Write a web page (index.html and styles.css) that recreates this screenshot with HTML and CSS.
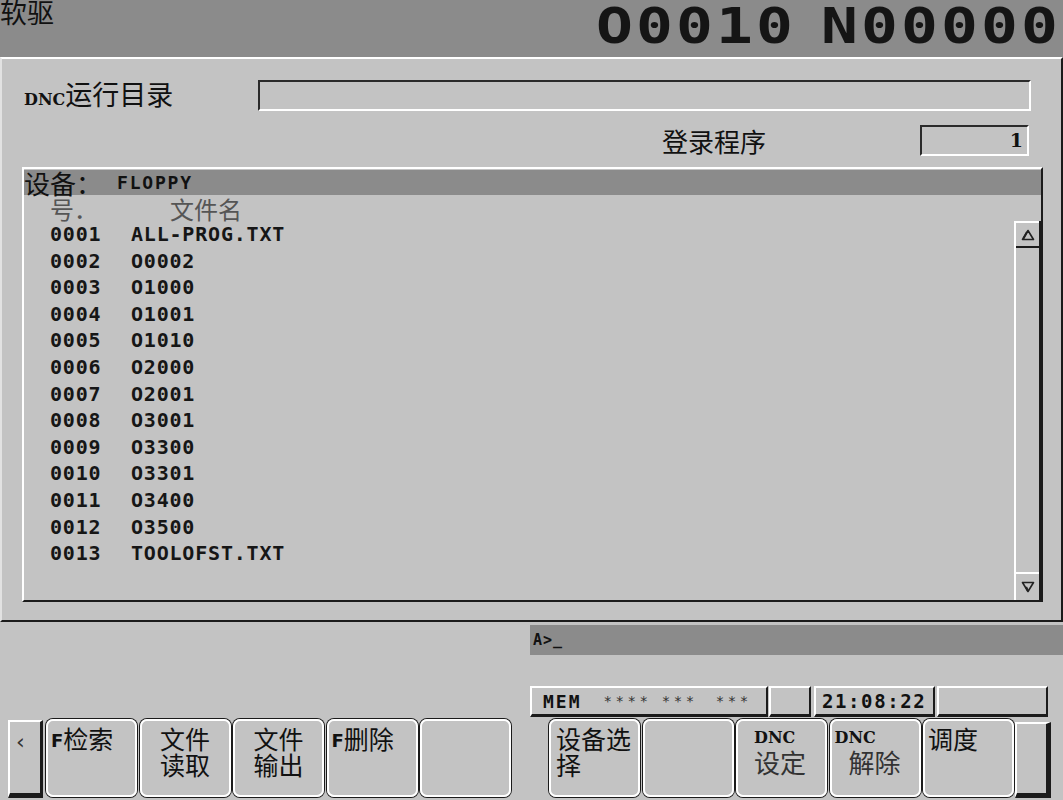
FILE: index.html
```html
<!DOCTYPE html>
<html lang="zh-CN">
<head>
<meta charset="utf-8">
<title>软驱 DNC</title>
<link rel="stylesheet" href="styles.css">
</head>
<body>
<div class="screen">
  <header class="topbar">
    <div class="mode">软驱</div>
    <div class="prog"><span>O0010</span><span>N00000</span></div>
  </header>

  <main class="main">
    <div class="row-dir">
      <div class="dir-label"><span class="latin">DNC</span>运行目录</div>
      <div class="field field-dir"></div>
    </div>
    <div class="row-reg">
      <div class="reg-label">登录程序</div>
      <div class="field field-reg">1</div>
    </div>

    <section class="list">
      <div class="list-head"><span class="dev">设备：</span><span class="devname">FLOPPY</span></div>
      <div class="list-body">
        <div class="list-main">
          <div class="cols"><span class="c-no">号．</span><span class="c-name">文件名</span></div>
          <ul class="files">
            <li><span class="no">0001</span><span class="nm">ALL-PROG.TXT</span></li>
            <li><span class="no">0002</span><span class="nm">O0002</span></li>
            <li><span class="no">0003</span><span class="nm">O1000</span></li>
            <li><span class="no">0004</span><span class="nm">O1001</span></li>
            <li><span class="no">0005</span><span class="nm">O1010</span></li>
            <li><span class="no">0006</span><span class="nm">O2000</span></li>
            <li><span class="no">0007</span><span class="nm">O2001</span></li>
            <li><span class="no">0008</span><span class="nm">O3001</span></li>
            <li><span class="no">0009</span><span class="nm">O3300</span></li>
            <li><span class="no">0010</span><span class="nm">O3301</span></li>
            <li><span class="no">0011</span><span class="nm">O3400</span></li>
            <li><span class="no">0012</span><span class="nm">O3500</span></li>
            <li><span class="no">0013</span><span class="nm">TOOLOFST.TXT</span></li>
          </ul>
        </div>
        <div class="scroll">
          <div class="sb-btn sb-up">
            <svg width="14" height="12" viewBox="0 0 14 12"><path d="M7 1.5 L12.5 10.5 H1.5 Z" fill="none" stroke="#222" stroke-width="1.6" stroke-linejoin="round"/><path d="M6 3 L2.5 9.5" stroke="#222" stroke-width="2"/></svg>
          </div>
          <div class="sb-track"></div>
          <div class="sb-btn sb-down">
            <svg width="14" height="12" viewBox="0 0 14 12"><path d="M1.5 1.5 H12.5 L7 10.5 Z" fill="none" stroke="#222" stroke-width="1.6" stroke-linejoin="round"/><path d="M5 6 L7 10" stroke="#222" stroke-width="2.2"/></svg>
          </div>
        </div>
      </div>
    </section>
  </main>

  <footer class="bottom">
    <div class="console">
      <div class="input">A&gt;_</div>
      <div class="status">
        <div class="cell c-mem"><b class="mem">MEM</b><span class="stars s1">****</span><span class="stars s2">***</span><span class="stars s3">***</span></div>
        <div class="cell c-e1"></div>
        <div class="cell c-time">21:08:22</div>
        <div class="cell c-e2"></div>
      </div>
    </div>
    <div class="softkeys">
      <div class="nav-key nav-left">‹</div>
      <div class="keygroup">
        <div class="key k-left"><b class="kf">F</b>检索</div>
        <div class="key k-center">文件<br>读取</div>
        <div class="key k-center">文件<br>输出</div>
        <div class="key k-left"><b class="kf">F</b>删除</div>
        <div class="key"></div>
      </div>
      <div class="keygroup group-right">
        <div class="key k-left k-wide">设备选<br>择</div>
        <div class="key"></div>
        <div class="key k-dnc k-dnc-set"><span class="kdnc">DNC</span><span class="kcn">设定</span></div>
        <div class="key k-dnc k-dnc-rel"><span class="kdnc">DNC</span><span class="kcn">解除</span></div>
        <div class="key k-left">调度</div>
      </div>
      <div class="nav-key nav-right"></div>
    </div>
  </footer>
</div>
</body>
</html>
```

FILE: styles.css
```css
* { box-sizing: border-box; margin: 0; padding: 0; }
html, body { width: 1063px; height: 800px; overflow: hidden; }
body {
  background: #c3c3c3;
  font-family: "Noto Sans CJK SC", sans-serif;
  color: #111;
}
.screen { width: 1063px; height: 800px; display: flex; flex-direction: column; }

/* top bar */
.topbar {
  height: 57px;
  flex: none;
  background: #8b8b8b;
  display: flex;
  justify-content: space-between;
  align-items: flex-start;
}
.mode { font-size: 27px; line-height: 30px; margin-top: -3px; }
.prog {
  font-family: "DejaVu Sans Mono", monospace;
  font-weight: bold;
  font-size: 49px;
  line-height: 50px;
  letter-spacing: 2.5px;
  display: flex;
  gap: 20px;
  margin-top: 2px;
  margin-right: 2px;
  white-space: nowrap;
  color: #151515;
  transform: scaleX(1.25);
  transform-origin: right center;
}

/* main panel */
.main {
  height: 565px;
  flex: none;
  border-top: 2px solid #fff;
  border-left: 2px solid #e2e2e2;
  border-right: 2px solid #1b1b1b;
  border-bottom: 2px solid #1b1b1b;
  padding-top: 21px;
}
.row-dir { display: flex; align-items: flex-start; height: 31px; padding-left: 22px; }
.dir-label { width: 234px; font-size: 27px; line-height: 31px; margin-top: -2px; white-space: nowrap; }
.latin { font-family: "DejaVu Serif", serif; font-weight: bold; font-size: 16px; }
.field {
  border-top: 2px solid #2a2a2a;
  border-left: 2px solid #2a2a2a;
  border-right: 2px solid #fff;
  border-bottom: 2px solid #fff;
}
.field-dir { width: 773px; height: 31px; }
.row-reg {
  display: flex;
  align-items: center;
  justify-content: flex-end;
  height: 31px;
  margin-top: 14px;
  padding-right: 32px;
}
.reg-label { font-size: 26px; line-height: 31px; margin-right: 154px; }
.field-reg {
  width: 109px;
  height: 31px;
  text-align: right;
  font-family: "DejaVu Serif", serif;
  font-weight: bold;
  font-size: 19px;
  line-height: 27px;
  padding-right: 4px;
}

/* list */
.list {
  margin: 11px 0 0 20px;
  width: 1021px;
  height: 435px;
  border-top: 2px solid #fff;
  border-left: 2px solid #fff;
  border-right: 2px solid #1b1b1b;
  border-bottom: 2px solid #1b1b1b;
  padding-top: 1px;
  display: flex;
  flex-direction: column;
}
.list-head {
  height: 25px;
  flex: none;
  background: #8b8b8b;
  display: flex;
  align-items: center;
  white-space: nowrap;
}
.dev { font-size: 26px; line-height: 25px; }
.devname {
  font-family: "DejaVu Sans Mono", monospace;
  font-weight: bold;
  font-size: 18px;
  letter-spacing: 1.8px;
  margin-left: 15px;
}
.list-body { flex: 1; display: flex; }
.list-main { flex: 1; }
.cols {
  height: 26px;
  padding-left: 26px;
  display: flex;
  font-size: 24px;
  line-height: 28px;
  color: #555;
}
.c-no { width: 120px; }
.files { list-style: none; padding-left: 26px; }
.files li {
  display: flex;
  height: 26.6px;
  line-height: 26.6px;
  font-family: "DejaVu Sans Mono", monospace;
  font-weight: bold;
  font-size: 20px;
  letter-spacing: 0.8px;
  color: #161616;
}
.no { width: 81px; }

.scroll {
  width: 27px;
  margin-top: 26px;
  border-left: 2px solid #fff;
  border-right: 2px solid #1b1b1b;
  display: flex;
  flex-direction: column;
}
.sb-btn { display: flex; align-items: center; justify-content: center; flex: none; }
.sb-up { height: 27px; border-top: 2px solid #fff; border-bottom: 2px solid #1b1b1b; }
.sb-track { flex: 1; }
.sb-down { height: 28px; border-top: 2px solid #fff; }

/* bottom */
.bottom { flex: 1; display: flex; flex-direction: column; }
.console { margin-left: 530px; padding-top: 3px; }
.input {
  height: 30px;
  background: #8b8b8b;
  font-family: "DejaVu Sans Mono", monospace;
  font-weight: bold;
  font-size: 15px;
  line-height: 30px;
  padding-left: 3px;
  letter-spacing: 1px;
}
.status { display: flex; margin-top: 31px; height: 31px; width: 518px; }
.cell {
  height: 31px;
  border-top: 2px solid #fff;
  border-left: 2px solid #fff;
  border-right: 2px solid #1b1b1b;
  border-bottom: 3px solid #1b1b1b;
  font-family: "DejaVu Sans Mono", monospace;
  font-weight: bold;
}
.c-mem { width: 238px; margin-right: 1px; display: flex; align-items: center; padding-left: 11px; }
.mem { font-size: 18px; letter-spacing: 2px; }
.stars { font-size: 14px; letter-spacing: 3.6px; color: #333; font-weight: normal; }
.s1 { margin-left: 22px; }
.s2 { margin-left: 10px; }
.s3 { margin-left: 18px; }
.c-e1 { width: 42px; margin-right: 3px; }
.c-time { width: 121px; margin-right: 2px; font-size: 19px; letter-spacing: 1.6px; line-height: 26px; padding-left: 6px; }
.c-e2 { width: 111px; }

/* soft keys */
.softkeys { display: flex; margin-top: 2px; height: 81px; padding-left: 8px; }
.nav-key {
  height: 78px;
  border-top: 2px solid #fff;
  border-left: 2px solid #fff;
  border-right: 3px solid #1b1b1b;
  border-bottom: 5px solid #1b1b1b;
}
.nav-left {
  width: 35px;
  margin-right: 3px;
  margin-top: 1px;
  font-family: "DejaVu Sans", sans-serif;
  font-size: 22px;
  line-height: 20px;
  color: #333;
  padding: 10px 0 0 6px;
}
.nav-right { width: 36px; margin-left: 1px; margin-top: 3px; height: 76px; border-right-width: 5px; }
.keygroup { display: flex; gap: 2.5px; }
.group-right { margin-left: 38px; }
.key {
  width: 91px;
  height: 78px;
  border: 2px solid #fff;
  border-radius: 7px;
  box-shadow: 0 0 0 1px #1b1b1b;
  font-size: 25px;
  line-height: 26px;
  padding: 4px 3px 0;
  white-space: nowrap;
}
.k-center { text-align: center; }
.k-wide { padding-left: 5px; }
.kf { font-family: "DejaVu Sans", sans-serif; font-weight: bold; font-size: 18px; vertical-align: 2px; }
.k-dnc { display: flex; flex-direction: column; }
.kdnc {
  font-family: "DejaVu Serif", serif;
  font-weight: bold;
  font-size: 16px;
  line-height: 22px;
  margin-top: 2px;
}
.kcn { color: #333; font-size: 26px; }
.k-dnc-set { padding-left: 16px; }
.k-dnc-rel .kcn { padding-left: 14px; }
```
